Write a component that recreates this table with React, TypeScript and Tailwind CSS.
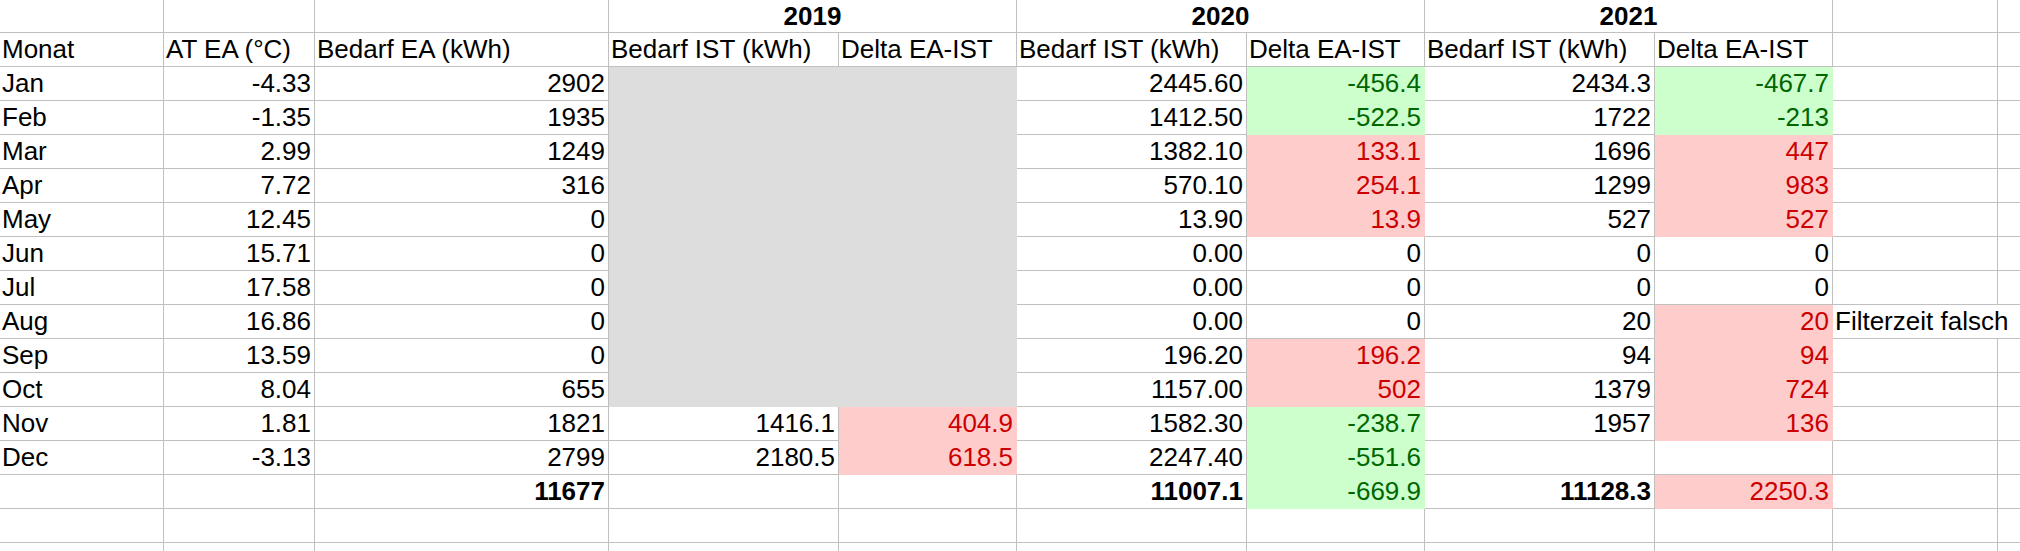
import React from "react";

type Tone = "good" | "bad" | "gray";

interface CellDef {
  text?: string;
  align?: "left" | "right" | "center";
  tone?: Tone;
  bold?: boolean;
  span?: 2;
  last?: boolean;
}

// LibreOffice "Good" / "Bad" cell styles plus the grey filler block
const toneClass: Record<Tone, string> = {
  good: "bg-[#ccffcc] border-[#ccffcc] text-[#006600]",
  bad: "bg-[#ffcccc] border-[#ffcccc] text-[#cc0000]",
  gray: "bg-[#dddddd] border-[#dddddd]",
};

const r = (text: string): CellDef => ({ text, align: "right" });
const good = (text: string): CellDef => ({ text, align: "right", tone: "good" });
const bad = (text: string): CellDef => ({ text, align: "right", tone: "bad" });
const gray: CellDef = { tone: "gray" };
const empty: CellDef = {};
const tail: CellDef = { last: true };

function Cell({ cell, header }: { cell: CellDef; header?: boolean }) {
  const { text, align = "left", tone, bold, span, last } = cell;
  return (
    <div
      className={[
        "flex items-end overflow-hidden whitespace-nowrap border-b px-[2px]",
        header ? "h-[33px] pb-[3px]" : "h-[34px] pb-[4px]",
        last ? "" : "border-r",
        span === 2 ? "col-span-2" : "",
        tone ? toneClass[tone] : "border-[#c0c0c0]",
        align === "right" ? "justify-end pr-[3px]" : "",
        align === "center" ? "justify-center" : "",
        bold ? "font-bold" : "",
        header ? "text-[26px] leading-[26px]" : "text-[26px] leading-[26px]",
      ].join(" ")}
    >
      {text}
    </div>
  );
}

const yearRow: CellDef[] = [
  empty,
  empty,
  empty,
  { text: "2019", align: "center", bold: true, span: 2 },
  { text: "2020", align: "center", bold: true, span: 2 },
  { text: "2021", align: "center", bold: true, span: 2 },
  empty,
  tail,
];

const labelRow: CellDef[] = [
  "Monat",
  "AT EA (°C)",
  "Bedarf EA (kWh)",
  "Bedarf IST (kWh)",
  "Delta EA-IST",
  "Bedarf IST (kWh)",
  "Delta EA-IST",
  "Bedarf IST (kWh)",
  "Delta EA-IST",
  "",
]
  .map((text): CellDef => ({ text }))
  .concat(tail);

const m = (name: string, rest: CellDef[]): CellDef[] => [{ text: name }, ...rest];

const rows: CellDef[][] = [
  m("Jan", [r("-4.33"), r("2902"), gray, gray, r("2445.60"), good("-456.4"), r("2434.3"), good("-467.7"), empty, tail]),
  m("Feb", [r("-1.35"), r("1935"), gray, gray, r("1412.50"), good("-522.5"), r("1722"), good("-213"), empty, tail]),
  m("Mar", [r("2.99"), r("1249"), gray, gray, r("1382.10"), bad("133.1"), r("1696"), bad("447"), empty, tail]),
  m("Apr", [r("7.72"), r("316"), gray, gray, r("570.10"), bad("254.1"), r("1299"), bad("983"), empty, tail]),
  m("May", [r("12.45"), r("0"), gray, gray, r("13.90"), bad("13.9"), r("527"), bad("527"), empty, tail]),
  m("Jun", [r("15.71"), r("0"), gray, gray, r("0.00"), r("0"), r("0"), r("0"), empty, tail]),
  m("Jul", [r("17.58"), r("0"), gray, gray, r("0.00"), r("0"), r("0"), r("0"), empty, tail]),
  m("Aug", [
    r("16.86"),
    r("0"),
    gray,
    gray,
    r("0.00"),
    r("0"),
    r("20"),
    bad("20"),
    { text: "Filterzeit falsch", span: 2, last: true },
  ]),
  m("Sep", [r("13.59"), r("0"), gray, gray, r("196.20"), bad("196.2"), r("94"), bad("94"), empty, tail]),
  m("Oct", [r("8.04"), r("655"), gray, gray, r("1157.00"), bad("502"), r("1379"), bad("724"), empty, tail]),
  m("Nov", [r("1.81"), r("1821"), r("1416.1"), bad("404.9"), r("1582.30"), good("-238.7"), r("1957"), bad("136"), empty, tail]),
  m("Dec", [r("-3.13"), r("2799"), r("2180.5"), bad("618.5"), r("2247.40"), good("-551.6"), empty, empty, empty, tail]),
  [
    empty,
    empty,
    { text: "11677", align: "right", bold: true },
    empty,
    empty,
    { text: "11007.1", align: "right", bold: true },
    good("-669.9"),
    { text: "11128.3", align: "right", bold: true },
    bad("2250.3"),
    empty,
    tail,
  ],
  [empty, empty, empty, empty, empty, empty, empty, empty, empty, empty, tail],
  [empty, empty, empty, empty, empty, empty, empty, empty, empty, empty, tail],
];

export default function App() {
  return (
    <div className="h-[551px] w-[2020px] overflow-hidden bg-white text-black [font-family:'Liberation_Sans',Arial,sans-serif]">
      <div className="grid grid-cols-[164px_151px_294px_230px_178px_230px_178px_230px_178px_165px_22px]">
        {yearRow.map((c, i) => (
          <Cell key={`y${i}`} cell={c} header />
        ))}
        {labelRow.map((c, i) => (
          <Cell key={`l${i}`} cell={c} />
        ))}
        {rows.map((row, ri) =>
          row.map((c, ci) => <Cell key={`${ri}-${ci}`} cell={c} />),
        )}
      </div>
    </div>
  );
}
